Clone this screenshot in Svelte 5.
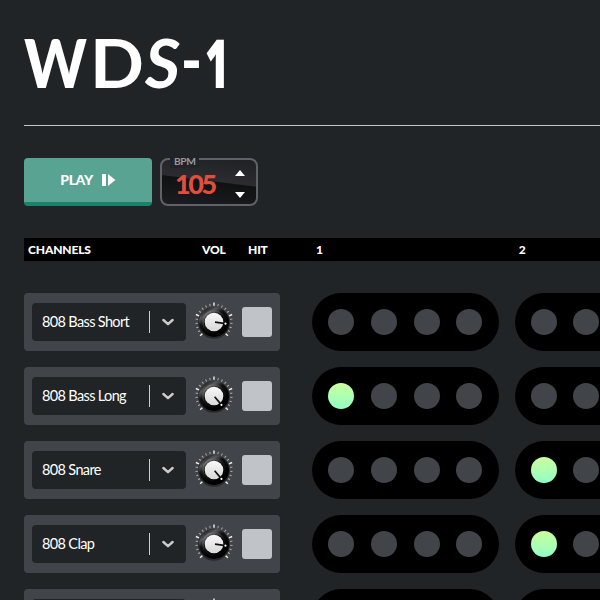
<script>
  const logo = [
    { ch: 'W', x: 0, y: 74, w: 63, cls: 'w' },
    { ch: 'D', x: 66, y: 74, w: 54, cls: 'd' },
    { ch: 'S', x: 121, y: 74, w: 35, cls: 's' },
    { ch: '-', x: 157, y: 70, w: 21, cls: 'w' },
    { ch: '1', x: 181, y: 74, w: 24, cls: 'one' }
  ];
  const channels = [
    { name: '808 Bass Short', turn: 8, on: [] },
    { name: '808 Bass Long', turn: 50, on: [0] },
    { name: '808 Snare', turn: 50, on: [4] },
    { name: '808 Clap', turn: 8, on: [4] },
    { name: '', turn: 8, on: [] }
  ];
  const ticks = Array.from({ length: 21 }, (_, i) => ({ angle: i * 13.5 - 135, major: i % 5 === 0 }));
</script>

<main>
  <header>
    <h1>
      <svg width="230" height="100" viewBox="0 0 230 100" aria-label="WDS-1">
        {#each logo as l}
          <text class={l.cls} x={l.x} y={l.y} textLength={l.w} lengthAdjust="spacingAndGlyphs">{l.ch}</text>
        {/each}
      </svg>
    </h1>
  </header>

  <div class="controls">
    <button class="play">
      <span>PLAY</span>
      <svg width="14" height="12" viewBox="0 0 14 12"><path d="M0 0h4v12H0zM6 0l7.4 6L6 12z" fill="#fff" /></svg>
    </button>
    <div class="bpm">
      <span class="legend">BPM</span>
      <span class="num">105</span>
      <svg class="arrows" width="10" height="28" viewBox="0 0 10 28"><path d="M0 6l5-6 5 6zM0 22h10l-5 6z" fill="#fff" /></svg>
    </div>
  </div>

  <div class="head">
    <span class="channels">CHANNELS</span><span class="vol">VOL</span><span class="hit">HIT</span><span class="beat">1</span><span class="beat">2</span>
  </div>

  <div class="rows">
    {#each channels as c}
      <div class="row">
        <div class="channel">
          <div class="select">
            <span class="name">{c.name}</span>
            <i></i>
            <svg width="12" height="8" viewBox="0 0 12 8"><path d="M1.400 2L6 6.200l4.600-4.200" fill="none" stroke="#cbcbcb" stroke-width="2.400" stroke-linecap="round" stroke-linejoin="round" /></svg>
          </div>
          <svg class="knob" width="40" height="40" viewBox="-20 -20 40 40">
            {#each ticks as t}
              <line y1="-16.200" y2={t.major ? -19.6 : -18.6} transform="rotate({t.angle})" stroke={t.major ? '#f1f1f1' : '#a9abae'} stroke-width={t.major ? 1.4 : 1} />
            {/each}
            <circle cy="1" r="15.800" fill="#191a1c" opacity=".65" />
            <circle r="15" fill="url(#rim)" />
            <circle r="11" fill="none" stroke="url(#edge)" stroke-width="1.500" />
            <circle r="9.300" fill="url(#cap)" />
            <g transform="rotate({c.turn})">
              <path d="M1 0h9" stroke="#111" stroke-width="1.700" />
              <circle cx="11.600" r="1.100" fill="#fff" />
            </g>
          </svg>
          <button class="pad" aria-label="Hit"></button>
        </div>
        <div class="beats">
          {#each [0, 1] as b}
            <div class="group">
              {#each [0, 1, 2, 3] as s}
                <span class="step" class:on={c.on.includes(b * 4 + s)}></span>
              {/each}
            </div>
          {/each}
        </div>
      </div>
    {/each}
  </div>

  <svg width="0" height="0" class="defs">
    <defs>
      <linearGradient id="rim" x1="0.15" y1="0.1" x2="0.6" y2="0.8">
        <stop offset="0" stop-color="#222" /><stop offset=".22" stop-color="#58595b" /><stop offset=".45" stop-color="#111" /><stop offset="1" stop-color="#000" />
      </linearGradient>
      <linearGradient id="edge" x1="0.1" y1="0" x2="0.8" y2="1">
        <stop offset="0" stop-color="#8b8c8e" /><stop offset=".5" stop-color="#161616" /><stop offset="1" stop-color="#000" />
      </linearGradient>
      <linearGradient id="cap" x1="0" y1="0" x2="0" y2="1">
        <stop offset="0" stop-color="#f8f8f8" /><stop offset="1" stop-color="#d8d8d8" />
      </linearGradient>
    </defs>
  </svg>
</main>

<style>
  :global(body) { margin: 0; background: #212427; overflow: hidden; }
  main { box-sizing: border-box; width: 600px; height: 600px; overflow: hidden; padding-left: 24px; font-family: Lato, "Liberation Sans", sans-serif; color: #fff; background: #212427; }
  header { box-sizing: border-box; height: 126px; padding-top: 14px; border-bottom: 1px solid #c1c4c8; }
  h1 { margin: 0; line-height: 0; }
  h1 text { font-size: 67px; font-weight: 700; fill: #fff; }
  h1 .w { font-weight: 900; }
  h1 .s { font-style: italic; }
  h1 .one { font-family: "Open Sans", sans-serif; font-weight: 800; }
  button { border: 0; padding: 0; font-family: inherit; color: inherit; }
  .controls { display: flex; gap: 8px; padding-top: 32px; }
  .play { box-sizing: border-box; width: 128px; height: 48px; display: flex; align-items: center; justify-content: center; gap: 9px; border-bottom: 4px solid #1c826d; border-radius: 4px; background: #59a392; }
  .play span { padding-bottom: 1px; font-size: 14px; line-height: 17px; font-weight: 900; letter-spacing: -0.400px; }
  .bpm { position: relative; box-sizing: border-box; width: 98px; height: 48px; border: 2px solid #606267; border-radius: 8px; display: flex; align-items: center; justify-content: space-between; padding: 3px 11px 0 13px; background: linear-gradient(187deg, #202125 0, #2b2b30 47%, #101113 49%, #1c1d20 100%); }
  .legend { position: absolute; left: 8px; top: -5px; padding: 0 4px; font-size: 10.300px; line-height: 13px; font-weight: 700; letter-spacing: -0.500px; color: #96989e; background: #212427; }
  .num { font-size: 27px; line-height: 44px; font-weight: 900; color: #e04f3d; letter-spacing: -2.400px; }
  .head { display: flex; align-items: center; height: 23px; margin-top: 32px; padding-left: 4px; background: #000; font-size: 12px; font-weight: 900; letter-spacing: -0.150px; white-space: nowrap; overflow: hidden; }
  .head span { flex: none; }
  .channels { width: 174px; }
  .vol { width: 46px; }
  .hit { width: 68px; }
  .beat { width: 202.670px; }
  .rows { display: flex; flex-direction: column; gap: 16px; margin-top: 32px; }
  .row { display: flex; gap: 32.200px; height: 58px; }
  .channel { box-sizing: border-box; width: 256px; flex: none; display: flex; align-items: center; padding: 0 8px; border-radius: 4px; background: #414448; }
  .select { box-sizing: border-box; width: 154px; height: 38px; display: flex; align-items: center; padding: 0 12px 0 10px; border-radius: 4px; background: #212427; }
  .name { flex: 1; padding-bottom: 2px; font-size: 14.500px; letter-spacing: -0.650px; white-space: nowrap; }
  .select i { width: 1px; height: 22px; margin-right: 12px; background: #cbcbcb; }
  .knob { margin: 0 8px; }
  .pad { width: 30px; height: 30px; border-radius: 3px; background: #c0c3c8; }
  .beats { display: flex; gap: 15.850px; }
  .group { box-sizing: border-box; width: 186.670px; flex: none; display: flex; align-items: center; gap: 16.670px; padding-left: 16px; border-radius: 29px; background: #000; }
  .step { width: 26px; height: 26px; flex: none; border-radius: 50%; background: #414448; }
  .step.on { background: linear-gradient(#ccff9e, #90ffc5); }
  .defs { position: absolute; }
</style>
